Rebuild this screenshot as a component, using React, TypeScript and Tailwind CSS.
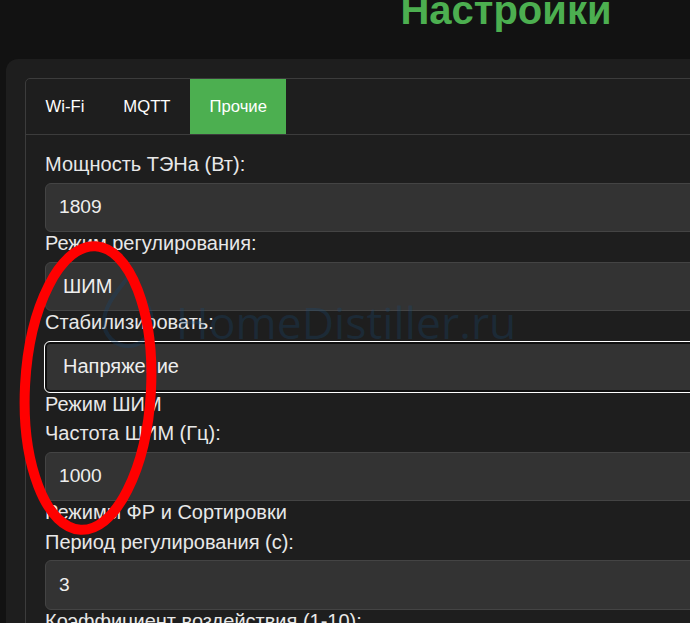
const tabs = ["Wi-Fi", "MQTT", "Прочие"];

const Label = ({ text }: { text: string }) => (
  <div className="mb-[6.5px] block text-[20px] leading-[23px] text-[#e8e8e8]">{text}</div>
);

const Field = ({ value }: { value: string }) => (
  <div className="flex h-[49.5px] items-center rounded-[6px] border border-[#444] bg-[#333] pl-[13px] text-[19.2px] leading-[22px] text-[#eee]">
    {value}
  </div>
);

const Select = ({ value, focused }: { value: string; focused?: boolean }) =>
  focused ? (
    <div className="-mx-px flex h-[52px] items-center rounded-[6px] border border-white bg-[#333] pl-[18px] text-[20px] leading-[23px] text-[#eee] shadow-[inset_0_0_0_2px_#101010]">
      {value}
    </div>
  ) : (
    <div className="flex h-[49.5px] items-center rounded-[6px] border border-[#444] bg-[#333] pl-[17px] text-[20px] leading-[23px] text-[#eee]">
      {value}
    </div>
  );

const App = () => {
  return (
    <div className="relative h-[623px] w-full overflow-hidden bg-[#121212] font-['Liberation_Sans',Arial,sans-serif]">
      <div className="w-[1012px]">
        <h1 className="-mt-[13.5px] mb-[26.5px] text-center text-[40px] font-bold leading-[46px] text-[#4caf50]">
          Настройки
        </h1>
        <div className="mx-[6px] rounded-[12px] bg-[#1e1e1e] p-[19px]">
          <div className="rounded-[5px] border border-[#3c3c3c]">
            <div className="flex border-b border-[#3c3c3c]">
              {tabs.map((t) => (
                <div
                  key={t}
                  className={
                    t === "Прочие"
                      ? "flex h-[55px] items-center bg-[#4caf50] px-[19.5px] text-[16.67px] text-white"
                      : "flex h-[55px] items-center px-[19.5px] text-[16.67px] text-white"
                  }
                >
                  {t}
                </div>
              ))}
            </div>
            <div className="px-[19px] pb-[20px] pt-[18px]">
              <Label text="Мощность ТЭНа (Вт):" />
              <Field value="1809" />
              <Label text="Режим регулирования:" />
              <Select value="ШИМ" />
              <Label text="Стабилизировать:" />
              <Select value="Напряжение" focused />
              <Label text="Режим ШИМ" />
              <Label text="Частота ШИМ (Гц):" />
              <Field value="1000" />
              <Label text="Режимы ФР и Сортировки" />
              <Label text="Период регулирования (с):" />
              <Field value="3" />
              <Label text="Коэффициент воздействия (1-10):" />
              <Field value="5" />
            </div>
          </div>
        </div>
      </div>

      {/* watermark */}
      <div className="pointer-events-none absolute left-[100px] top-[274px] flex items-end gap-[20px]">
        <svg width="56" height="76" viewBox="0 0 56 76">
          <path
            d="M28 3 C 22 12, 4 30, 4 48 A 24 24 0 0 0 52 48 C 52 30, 34 12, 28 3 Z"
            fill="none"
            stroke="rgba(23,73,117,0.28)"
            strokeWidth="4"
          />
        </svg>
        <span className="mb-[-2px] font-['Open_Sans',sans-serif] text-[44.5px] leading-[60px] text-[rgba(23,73,117,0.28)]">
          HomeDistiller.ru
        </span>
      </div>

      {/* annotation */}
      <svg className="pointer-events-none absolute left-0 top-0" width="690" height="623">
        <ellipse
          cx="88"
          cy="388"
          rx="63"
          ry="142"
          fill="none"
          stroke="#ff0000"
          strokeWidth="10"
          transform="rotate(3 88 388)"
        />
      </svg>
    </div>
  );
};

export default App;
